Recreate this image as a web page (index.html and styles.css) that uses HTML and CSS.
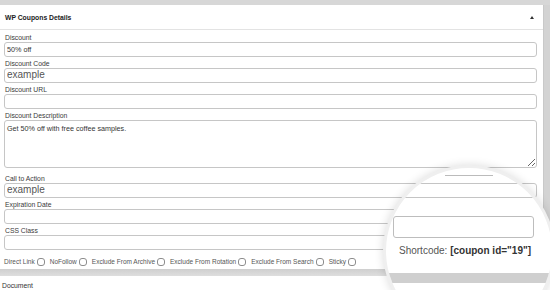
FILE: index.html
```html
<!DOCTYPE html>
<html lang="en">

<head>
    <meta charset="UTF-8">
    <title>WP Coupons Details</title>
    <link rel="stylesheet" href="styles.css">
</head>

<body>
    <div class="topbar"></div>

    <div class="page">
        <div class="panel">
            <div class="panel-head">
                <h2>WP Coupons Details</h2>
                <span class="caret"></span>
            </div>

            <div class="panel-body">
                <div class="field">
                    <label>Discount</label>
                    <input type="text" value="50% off">
                </div>
                <div class="field">
                    <label>Discount Code</label>
                    <input type="text" class="big" placeholder="example">
                </div>
                <div class="field">
                    <label>Discount URL</label>
                    <input type="text">
                </div>
                <div class="field field-area">
                    <label>Discount Description</label>
                    <textarea>Get 50% off with free coffee samples.</textarea>
                </div>
                <div class="field">
                    <label>Call to Action</label>
                    <input type="text" class="big" placeholder="example">
                </div>
                <div class="field">
                    <label>Expiration Date</label>
                    <input type="text">
                </div>
                <div class="field">
                    <label>CSS Class</label>
                    <input type="text">
                </div>

                <div class="checks">
                    <label>Direct Link <input type="checkbox"></label>
                    <label>NoFollow <input type="checkbox"></label>
                    <label>Exclude From Archive <input type="checkbox"></label>
                    <label>Exclude From Rotation <input type="checkbox"></label>
                    <label>Exclude From Search <input type="checkbox"></label>
                    <label>Sticky <input type="checkbox"></label>
                </div>
            </div>
        </div>
        <div class="strip"></div>
    </div>

    <div class="band"></div>
    <div class="doc">Document</div>

    <!-- zoomed-in lens over the shortcode, cut off by the window bottom -->
    <div class="lens-clip">
        <div class="lens">
            <div class="lens-line"></div>
            <div class="lens-box lens-box-top"></div>
            <div class="lens-box lens-box-main"></div>
            <p class="shortcode">Shortcode: <b>[coupon id="19"]</b></p>
            <div class="lens-band"></div>
        </div>
    </div>
</body>

</html>
```

FILE: styles.css
```css
/* page */
html {
    overflow: hidden;
}

body {
    margin: 0;
    background: #fff;
    font-family: "Liberation Sans", Arial, sans-serif;
    color: #444;
    overflow: hidden;
    height: 290px;
    position: relative;
}

.topbar {
    height: 5px;
    background: #d7d7d7;
}

.page {
    display: flex;
}

.panel {
    width: 543px;
    background: #fff;
    border-right: 1px solid #c9c9c9;
}

.strip {
    flex: 1;
    background: #d3d3d3;
}

/* header */
.panel-head {
    height: 24px;
    display: flex;
    align-items: center;
    justify-content: space-between;
    padding: 0 9px 0 5px;
    border-bottom: 1px solid #e3e3e3;
}

.panel-head h2 {
    margin: 0;
    font-size: 6.8px;
    font-weight: bold;
    color: #222;
}

.caret {
    width: 0;
    height: 0;
    border-left: 2px solid transparent;
    border-right: 2px solid transparent;
    border-bottom: 3px solid #333;
}

/* fields */
.panel-body {
    padding: 4px 6px 0 4px;
}

.field {
    margin-bottom: 3px;
}

.field-area {
    margin-bottom: 7px;
}

.field label {
    display: block;
    font-size: 6.8px;
    line-height: 8px;
    color: #3a3a3a;
    padding-left: 1px;
}

.field input,
.field textarea {
    display: block;
    width: 100%;
    box-sizing: border-box;
    height: 15px;
    margin: 0;
    border: 1px solid #c6c6c6;
    border-radius: 3px;
    padding: 0 2px;
    font-family: "Liberation Sans", Arial, sans-serif;
    font-size: 7.2px;
    color: #333;
    background: #fff;
    outline: none;
}

.field input.big::placeholder {
    font-size: 10px;
    color: #555;
}

.field textarea {
    height: 48px;
    padding-top: 3px;
    resize: vertical;
}

/* checkboxes */
.checks {
    display: flex;
    align-items: center;
    height: 15px;
    padding-top: 1px;
}

.checks label {
    display: flex;
    align-items: center;
    font-size: 6.5px;
    color: #555;
    margin-right: 5px;
}

.checks input {
    appearance: none;
    width: 8px;
    height: 8px;
    margin: 0 0 0 2px;
    border: 1px solid #8d8d8d;
    border-radius: 3px;
    background: #fff;
}

/* bottom */
.band {
    height: 7px;
    background: linear-gradient(#cfcfcf, #dedede);
}

.doc {
    font-size: 6.8px;
    color: #333;
    padding: 6px 0 0 2px;
}

/* lens */
.lens-clip {
    position: absolute;
    left: 370px;
    top: 150px;
    width: 180px;
    height: 140px;
    overflow: hidden;
}

.lens {
    margin: 15px 0 0 13px;
    width: 166px;
    height: 166px;
    border: 3px solid #efefef;
    border-radius: 50%;
    background: #fff;
    overflow: hidden;
    position: relative;
    box-shadow: 0 0 10px rgba(0, 0, 0, 0.14);
}

.lens-line {
    position: absolute;
    left: 59px;
    top: 7px;
    width: 48px;
    border-top: 1px solid #bbb;
}

.lens-box {
    position: absolute;
    border: 1px solid #c4c4c4;
    border-radius: 3px;
}

.lens-box-top {
    left: 14px;
    top: 15px;
    width: 133px;
    height: 13px;
}

.lens-box-main {
    left: 7px;
    top: 48px;
    width: 139px;
    height: 20px;
    border-color: #bdbdbd;
}

.shortcode {
    position: absolute;
    left: 13px;
    top: 77px;
    margin: 0;
    font-size: 10px;
    color: #555;
    white-space: nowrap;
}

.shortcode b {
    color: #333;
}

.lens-band {
    position: absolute;
    left: 0;
    right: 0;
    top: 105px;
    height: 10px;
    background: #cfcfcf;
}
```
